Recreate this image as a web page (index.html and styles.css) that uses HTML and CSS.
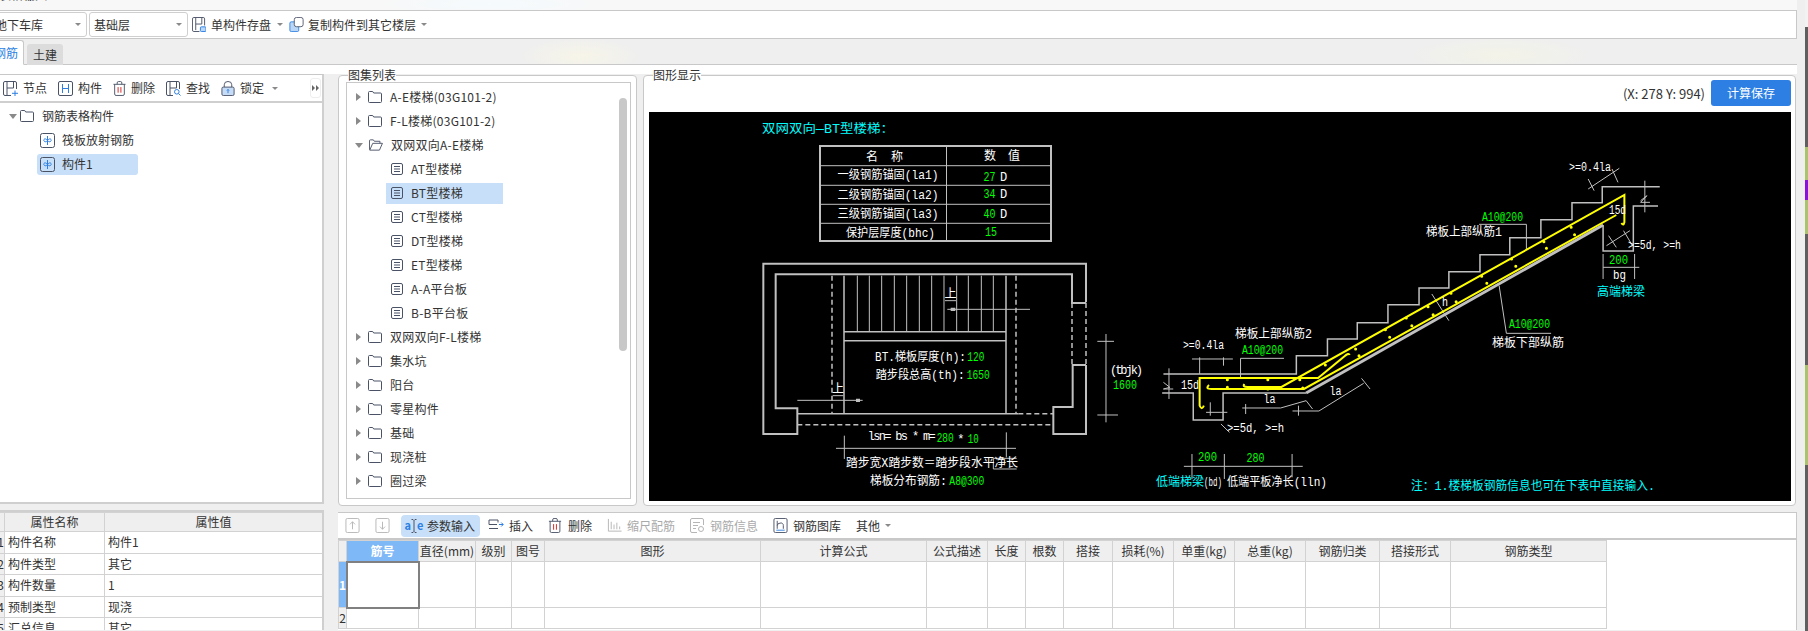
FILE: index.html
```html
<!DOCTYPE html>
<html lang="zh-CN">
<head>
<meta charset="utf-8">
<title>表格输入</title>
<link rel="stylesheet" href="styles.css">
</head>
<body>
<svg class="defs" aria-hidden="true">
  <symbol id="folder" viewBox="0 0 14 12"><path class="ln" d="M.5 2V1.5a1 1 0 0 1 1-1h3.2l1 1.5h6.8a1 1 0 0 1 1 1v7.5a1 1 0 0 1-1 1h-11a1 1 0 0 1-1-1z"/></symbol>
  <symbol id="open" viewBox="0 0 15 12"><path class="ln" d="M.5 11V1.5a1 1 0 0 1 1-1h3.2l1 1.5h6v2M.8 11.5h10.4l3.2-7.3H4z"/></symbol>
  <symbol id="doc" viewBox="0 0 12 12"><rect class="ln" x=".5" y=".5" width="11" height="11" rx="1.5"/><path class="ln" d="M3 3.5h6M3 6h6M3 8.5h6"/></symbol>
  <symbol id="leaf" viewBox="0 0 15 15"><rect class="ln" x=".5" y=".5" width="14" height="14" rx="2"/><path class="bl" d="M7.500 3v9M7.500 7.500C5 4 2.500 7 4.500 8.500 5.500 9.200 6.500 8.500 7.500 7.500 10 4 12.500 7 10.500 8.500 9.500 9.200 8.500 8.500 7.500 7.500"/></symbol>
  <symbol id="save" viewBox="0 0 15 16"><path class="ln" d="M8 15.5H2a1.5 1.5 0 0 1-1.500-1.500V2A1.500 1.500 0 0 1 2 .5h10A1.500 1.500 0 0 1 13.500 2v7M4 1v13M4 7.500h6.500M10.500 1v6.500"/><rect class="blf" x="9" y="10.500" width="6" height="5" rx="1"/></symbol>
  <symbol id="copy" viewBox="0 0 16 17"><rect class="blf" x=".5" y="5.500" width="10" height="11" rx="1.500"/><rect class="lnw" x="5.500" y=".5" width="10" height="10.500" rx="2.500"/></symbol>
  <symbol id="node" viewBox="0 0 15 15"><path class="ln" d="M8 14.500H2A1.500 1.500 0 0 1 .5 13V2A1.500 1.500 0 0 1 2 .5h10A1.500 1.500 0 0 1 13.500 2v6M4 1v13M4 7h6.500M10.500 1v6"/><path class="bl" d="M12 9.500v5.500M9 12.300h6"/></symbol>
  <symbol id="part" viewBox="0 0 15 15"><rect class="ln" x=".5" y=".5" width="14" height="14" rx="1.500"/><path class="bl" d="M4.500 3v9M10.500 3v9M4.500 7.500h6"/></symbol>
  <symbol id="trash" viewBox="0 0 14 16"><path class="ln" d="M.5 3.500h13M4.500 3.500V2A1.500 1.500 0 0 1 6 .5h2A1.500 1.500 0 0 1 9.500 2v1.500M1.800 3.500v10.500a1.500 1.500 0 0 0 1.500 1.500h7.400a1.500 1.500 0 0 0 1.500-1.500V3.500"/><path class="rd" d="M5.500 6.500v6M8.500 6.500v6"/></symbol>
  <symbol id="find" viewBox="0 0 15 15"><path class="ln" d="M7 14.500H2A1.500 1.500 0 0 1 .5 13V2A1.500 1.500 0 0 1 2 .5h10A1.500 1.500 0 0 1 13.500 2v6M4 1v13M4 7h6.500M10.500 1v6"/><circle class="bl" cx="10.800" cy="10.800" r="2.300"/><path class="bl" d="M12.500 12.500l2 2"/></symbol>
  <symbol id="lock" viewBox="0 0 14 16"><path class="ln" d="M3 7V4a4 3.500 0 0 1 8 0v3"/><rect class="lkb" x=".5" y="6.500" width="13" height="9" rx="1.500"/><path class="bl" d="M7 9v4M5.800 10.200L7 9l1.200 1.200"/></symbol>
  <symbol id="up" viewBox="0 0 15 16"><rect class="dim" x=".5" y=".5" width="14" height="15" rx="1.500"/><path class="dim" d="M7.500 12V4M4.800 6.800l2.700-2.800 2.700 2.800"/></symbol>
  <symbol id="down" viewBox="0 0 15 16"><rect class="dim" x=".5" y=".5" width="14" height="15" rx="1.500"/><path class="dim" d="M7.500 4v8M4.800 9.200l2.700 2.800 2.700-2.800"/></symbol>
  <symbol id="ins" viewBox="0 0 16 14"><path class="ln" d="M10 4V1.500H1V6h8M1 10h9"/><path class="bl" d="M11 6h4M13.200 4l2 2-2 2"/></symbol>
  <symbol id="bars" viewBox="0 0 15 16"><path class="dim" d="M1 1v13h14M4 4v8M7 7v5M10 5v7M13 9v3"/></symbol>
  <symbol id="info" viewBox="0 0 15 15"><path class="dim" d="M7 14.500H2A1.500 1.500 0 0 1 .5 13V2A1.500 1.500 0 0 1 2 .5h10A1.500 1.500 0 0 1 13.500 2v5M3 4.500h7M3 7.500h5M3 10.500h3"/><circle class="dim" cx="11" cy="11" r="2.500"/></symbol>
  <symbol id="lib" viewBox="0 0 15 16"><rect class="ln" x=".5" y=".5" width="14" height="15" rx="1.500"/><path class="ln" d="M4 3v8.500M4 8a3 3 0 0 1 3-2.500A2.500 2.500 0 0 1 10.500 8v3.500"/><path class="bl" d="M3 13h9"/></symbol>
  <symbol id="beam" viewBox="0 0 6 16"><path class="ln" d="M.5 1.500H2L3 2.500 4 1.500h1.500M3 2.500v11M.5 14.500H2l1-1 1 1h1.500"/></symbol>
</svg>

<div class="screen">
  <div class="window">
    <div class="titlebar"><span class="title-text">表格输入</span></div>

    <div class="toolbar">
      <div class="select select-first"><span>地下车库</span><i class="caret"></i></div>
      <div class="select"><span>基础层</span><i class="caret"></i></div>
      <div class="tool tool-save"><svg class="ic ic-w14"><use href="#save"/></svg><span>单构件存盘</span><i class="caret"></i></div>
      <div class="tool tool-copy"><svg class="ic ic-w15"><use href="#copy"/></svg><span>复制构件到其它楼层</span><i class="caret"></i></div>
    </div>

    <div class="tabs">
      <div class="tab tab-active">钢筋</div>
      <div class="tab">土建</div>
    </div>

    <div class="workspace">
      <div class="left">
        <div class="left-panel">
          <div class="left-tools">
            <div class="tool"><svg class="ic"><use href="#node"/></svg><span>节点</span></div>
            <div class="tool"><svg class="ic"><use href="#part"/></svg><span>构件</span></div>
            <div class="tool"><svg class="ic ic-w13"><use href="#trash"/></svg><span>删除</span></div>
            <div class="tool"><svg class="ic"><use href="#find"/></svg><span>查找</span></div>
            <div class="tool"><svg class="ic ic-w14"><use href="#lock"/></svg><span>锁定</span><i class="caret"></i></div>
            <div class="more"><i class="mini"></i><i class="mini"></i></div>
          </div>
          <div class="left-tree">
            <div class="lrow"><i class="tri tri-down"></i><svg class="fold"><use href="#folder"/></svg><span class="lab">钢筋表格构件</span></div>
            <div class="lrow lrow-child"><div class="lsel"><svg class="ic"><use href="#leaf"/></svg><span>筏板放射钢筋</span></div></div>
            <div class="lrow lrow-child"><div class="lsel is-selected"><svg class="ic"><use href="#leaf"/></svg><span>构件1</span></div></div>
          </div>
        </div>
        <div class="props">
          <table class="grid prop-grid">
            <colgroup><col class="pc0"><col class="pc1"><col class="pc2"></colgroup>
            <thead><tr><th></th><th>属性名称</th><th>属性值</th></tr></thead>
            <tbody>
              <tr><td class="rn">1</td><td>构件名称</td><td>构件1</td></tr>
              <tr><td class="rn">2</td><td>构件类型</td><td>其它</td></tr>
              <tr><td class="rn">3</td><td>构件数量</td><td>1</td></tr>
              <tr><td class="rn">4</td><td>预制类型</td><td>现浇</td></tr>
              <tr><td class="rn">5</td><td>汇总信息</td><td>其它</td></tr>
            </tbody>
          </table>
        </div>
      </div>

      <div class="right">
        <div class="upper">
          <section class="group atlas">
            <div class="legend">图集列表</div>
            <div class="list">
              <div class="scrollbar"></div>
              <div class="row"><i class="tri"></i><svg class="fold"><use href="#folder"/></svg><span>A-E楼梯(03G101-2)</span></div>
              <div class="row"><i class="tri"></i><svg class="fold"><use href="#folder"/></svg><span>F-L楼梯(03G101-2)</span></div>
              <div class="row"><i class="tri tri-down"></i><svg class="fold"><use href="#open"/></svg><span>双网双向A-E楼梯</span></div>
              <div class="row row-child"><div class="csel"><svg class="doc"><use href="#doc"/></svg><span>AT型楼梯</span></div></div>
              <div class="row row-child"><div class="csel is-selected"><svg class="doc"><use href="#doc"/></svg><span>BT型楼梯</span></div></div>
              <div class="row row-child"><div class="csel"><svg class="doc"><use href="#doc"/></svg><span>CT型楼梯</span></div></div>
              <div class="row row-child"><div class="csel"><svg class="doc"><use href="#doc"/></svg><span>DT型楼梯</span></div></div>
              <div class="row row-child"><div class="csel"><svg class="doc"><use href="#doc"/></svg><span>ET型楼梯</span></div></div>
              <div class="row row-child"><div class="csel"><svg class="doc"><use href="#doc"/></svg><span>A-A平台板</span></div></div>
              <div class="row row-child"><div class="csel"><svg class="doc"><use href="#doc"/></svg><span>B-B平台板</span></div></div>
              <div class="row"><i class="tri"></i><svg class="fold"><use href="#folder"/></svg><span>双网双向F-L楼梯</span></div>
              <div class="row"><i class="tri"></i><svg class="fold"><use href="#folder"/></svg><span>集水坑</span></div>
              <div class="row"><i class="tri"></i><svg class="fold"><use href="#folder"/></svg><span>阳台</span></div>
              <div class="row"><i class="tri"></i><svg class="fold"><use href="#folder"/></svg><span>零星构件</span></div>
              <div class="row"><i class="tri"></i><svg class="fold"><use href="#folder"/></svg><span>基础</span></div>
              <div class="row"><i class="tri"></i><svg class="fold"><use href="#folder"/></svg><span>现浇桩</span></div>
              <div class="row"><i class="tri"></i><svg class="fold"><use href="#folder"/></svg><span>圈过梁</span></div>
              <div class="row"><i class="tri"></i><svg class="fold"><use href="#folder"/></svg></div>
            </div>
          </section>

          <section class="group drawing">
            <div class="legend">图形显示</div>
            <div class="draw-head"><span class="coords">(X: 278 Y: 994)</span><button class="calc">计算保存</button></div>
            <svg class="cad" viewBox="649 113 1142 389" width="1142" height="389">
              <text class="c" x="762" y="131" font-size="15" textLength="132" lengthAdjust="spacingAndGlyphs">双网双向—BT型楼梯：</text>
              <path class="th" d="M820 147H1051V242H820Z"/>
              <path class="tn" d="M946.500 147V242M820 166.700H1051M820 186.300H1051M820 205.300H1051M820 224.300H1051"/>
              <text class="w" x="866" y="159" textLength="37" lengthAdjust="spacing">名 称</text>
              <text class="w" x="984" y="158" textLength="36" lengthAdjust="spacing">数 值</text>
              <text class="w" x="837.500" y="177" textLength="101" lengthAdjust="spacingAndGlyphs">一级钢筋锚固(la1)</text>
              <text class="w" x="837.500" y="197" textLength="101" lengthAdjust="spacingAndGlyphs">二级钢筋锚固(la2)</text>
              <text class="w" x="837.500" y="216" textLength="101" lengthAdjust="spacingAndGlyphs">三级钢筋锚固(la3)</text>
              <text class="w" x="846" y="235" textLength="89" lengthAdjust="spacingAndGlyphs">保护层厚度(bhc)</text>
              <text class="g" x="983.500" y="179" textLength="12" lengthAdjust="spacingAndGlyphs">27</text><text class="w" x="1000" y="179">D</text>
              <text class="g" x="983.500" y="196" textLength="12" lengthAdjust="spacingAndGlyphs">34</text><text class="w" x="1000" y="196">D</text>
              <text class="g" x="983.500" y="216" textLength="12" lengthAdjust="spacingAndGlyphs">40</text><text class="w" x="1000" y="216">D</text>
              <text class="g" x="985" y="234" textLength="12" lengthAdjust="spacingAndGlyphs">15</text>

              <g transform="translate(740 250) scale(.33333)">
                <path class="th" d="M1038 160V44H70V555H172V478H107V76H996V162H1038M1038 348H998V474H940V555H1038V348"/>
                <path class="dash2" d="M996 162V345M1038 162V345M276 80V492M828 80V492M835 494H940M172 527H940"/>
                <path class="tw" d="M312 80V492M798 80V492M312 248H798M312 275H798M172 494H835"/>
                <path class="tn" d="M352 80V248M388 80V248M425 80V248M463 80V248M500 80V248M538 80V248M575 80V248M612 80V248M650 80V248M685 80V248M724 80V248M760 80V248M615 155H648M622 181H870M278 440H310M172 454H368M288 598H828M313 560V630M799 550V625M1098 255V520M1072 277H1122M1072 498H1134M760 628H830M760 660H830M760 628V660"/>
                <path class="fl" d="M632 176h14v10h-14zM348 449h12v10h-12z"/>
              </g>
              <text class="w" x="950.500" y="296" text-anchor="middle" font-size="13">上</text>
              <text class="w" x="838" y="391" text-anchor="middle" font-size="13">上</text>
              <text class="w" x="875" y="359" textLength="91" lengthAdjust="spacingAndGlyphs">BT.梯板厚度(h):</text>
              <text class="g" x="967.300" y="359" textLength="17" lengthAdjust="spacingAndGlyphs">120</text>
              <text class="w" x="875.700" y="377" textLength="89" lengthAdjust="spacingAndGlyphs">踏步段总高(th):</text>
              <text class="g" x="966.700" y="377" textLength="23" lengthAdjust="spacingAndGlyphs">1650</text>
              <text class="w" x="867.700" y="438" textLength="68" lengthAdjust="spacing">lsn= bs * m=</text>
              <text class="g" x="936.700" y="440" textLength="17" lengthAdjust="spacingAndGlyphs">280</text>
              <text class="w" x="957.300" y="441">*</text>
              <text class="g" x="967.700" y="441" textLength="11" lengthAdjust="spacingAndGlyphs">10</text>
              <text class="w" x="846" y="465" textLength="172" lengthAdjust="spacingAndGlyphs">踏步宽X踏步数＝踏步段水平净长</text>
              <text class="w" x="870" y="483" textLength="77" lengthAdjust="spacingAndGlyphs">梯板分布钢筋:</text>
              <text class="g" x="949.300" y="483" textLength="35" lengthAdjust="spacingAndGlyphs">A8@300</text>
              <text class="w" x="1110" y="372" textLength="33" lengthAdjust="spacing">(tbjk)</text>
              <text class="g" x="1113" y="387" textLength="24" lengthAdjust="spacingAndGlyphs">1600</text>

              <g transform="translate(1140 140) scale(.42602 .33333)">
                <path class="tw" d="M55 705H367V650H440V600H510V551H582V497H655V447H725V398H798V347H868V296H941V242H1014V191H1085V143H1220"/>
                <path class="tw" d="M52 762H125V843H195V762H390M1087 258V336H1158V201H1216"/>
                <path class="slope" d="M390 762L1087 258"/>
                <path class="tn" d="M796 256H907V330M236 658H338M236 658V715M843 440L860 583H965M420 816L525 733M520 718L540 750M420 816H358M372 800V830M330 807L390 785L405 810M330 807H240M248 795V825M685 465L725 545M1052 150L1125 88M1052 120L1066 155M1108 90L1122 130M1185 125V220M1175 185L1190 170L1175 190H1197M68 688V780M55 730L70 745L55 750H78M140 655V705M122 660H218M196 655V680M155 820H205M165 790V830M190 855L210 880M1095 320L1150 275M1100 290L1118 325M1135 275L1155 318M1087 385H1172M1087 345V420M1161 345V420M103 982H382M122 945V1020M198 945V1020M357 945V1015"/>
                <path class="ye" d="M245 735Q240 744 252 744H332L1137 168V250Q1135 262 1130 252"/>
                <path class="ye" d="M492 648Q490 640 480 652L418 717H140V800Q145 815 150 800"/>
                <path class="ye" d="M162 738Q152 750 168 750H385L1118 228"/>
                <path class="dots" d="M1012 265h.1M948 308h.1M872 360h.1M802 412h.1M730 463h.1M676 503h.1M625 537h.1M576 572h.1M506 630h.1M435 678h.1M375 722h.1M300 722h.1M205 722h.1M205 745h.1M300 750h.1M382 747h.1M514 650h.1M586 595h.1M638 560h.1M688 527h.1M742 488h.1M814 433h.1M882 382h.1M954 328h.1M1020 287h.1"/>
              </g>
              <text class="w" x="1569" y="169" textLength="42" lengthAdjust="spacingAndGlyphs">&gt;=0.4la</text>
              <text class="w" x="1609" y="212" textLength="17" lengthAdjust="spacingAndGlyphs">15d</text>
              <text class="g" x="1482" y="219" textLength="41" lengthAdjust="spacingAndGlyphs">A10@200</text>
              <text class="w" x="1426" y="234" textLength="76" lengthAdjust="spacingAndGlyphs">梯板上部纵筋1</text>
              <text class="w" x="1628" y="247" textLength="53" lengthAdjust="spacingAndGlyphs">&gt;=5d, &gt;=h</text>
              <text class="g" x="1609" y="262" textLength="19" lengthAdjust="spacingAndGlyphs">200</text>
              <text class="w" x="1613" y="277" textLength="13" lengthAdjust="spacingAndGlyphs">bg</text>
              <text class="c" x="1597" y="294" textLength="48" lengthAdjust="spacingAndGlyphs">高端梯梁</text>
              <text class="w" x="1442" y="304" textLength="6" lengthAdjust="spacingAndGlyphs">h</text>
              <text class="g" x="1509" y="326" textLength="41" lengthAdjust="spacingAndGlyphs">A10@200</text>
              <text class="w" x="1492" y="345" textLength="72" lengthAdjust="spacingAndGlyphs">梯板下部纵筋</text>
              <text class="w" x="1235" y="336" textLength="77" lengthAdjust="spacingAndGlyphs">梯板上部纵筋2</text>
              <text class="w" x="1183" y="347" textLength="41" lengthAdjust="spacingAndGlyphs">&gt;=0.4la</text>
              <text class="g" x="1242" y="352" textLength="41" lengthAdjust="spacingAndGlyphs">A10@200</text>
              <text class="w" x="1181" y="387" textLength="18" lengthAdjust="spacingAndGlyphs">15d</text>
              <text class="w" x="1263.500" y="401" textLength="12" lengthAdjust="spacingAndGlyphs">la</text>
              <text class="w" x="1329.500" y="393" textLength="12" lengthAdjust="spacingAndGlyphs">la</text>
              <text class="w" x="1227" y="430" textLength="57" lengthAdjust="spacingAndGlyphs">&gt;=5d, &gt;=h</text>
              <text class="g" x="1198" y="459" textLength="19" lengthAdjust="spacingAndGlyphs">200</text>
              <text class="g" x="1246.500" y="460" textLength="18" lengthAdjust="spacingAndGlyphs">280</text>
              <text class="c" x="1156" y="484" textLength="48" lengthAdjust="spacingAndGlyphs">低端梯梁</text>
              <text class="w" x="1204" y="484" textLength="18" lengthAdjust="spacingAndGlyphs">(bd)</text>
              <text class="w" x="1227" y="484" textLength="100" lengthAdjust="spacingAndGlyphs">低端平板净长(lln)</text>
              <text class="c" x="1411" y="488" textLength="244" lengthAdjust="spacingAndGlyphs">注：1.楼梯板钢筋信息也可在下表中直接输入.</text>
            </svg>
          </section>
        </div>

        <section class="lower">
          <div class="lower-tools">
            <svg class="ic"><use href="#up"/></svg>
            <svg class="ic ic-down"><use href="#down"/></svg>
            <div class="tool tool-active"><span class="ae">a<svg class="beam"><use href="#beam"/></svg>e</span><span>参数输入</span></div>
            <div class="tool"><svg class="ic ic-w16"><use href="#ins"/></svg><span>插入</span></div>
            <div class="tool tool-del"><svg class="ic ic-w14"><use href="#trash"/></svg><span>删除</span></div>
            <div class="tool is-off"><svg class="ic"><use href="#bars"/></svg><span>缩尺配筋</span></div>
            <div class="tool is-off"><svg class="ic"><use href="#info"/></svg><span>钢筋信息</span></div>
            <div class="tool"><svg class="ic"><use href="#lib"/></svg><span>钢筋图库</span></div>
            <div class="tool"><span>其他</span><i class="caret"></i></div>
          </div>
          <table class="grid rebar-grid">
            <colgroup>
              <col class="r0"><col class="r1"><col class="r2"><col class="r3"><col class="r4"><col class="r5"><col class="r6"><col class="r7"><col class="r8"><col class="r9"><col class="r10"><col class="r11"><col class="r12"><col class="r13"><col class="r14"><col class="r15"><col class="r16">
            </colgroup>
            <thead>
              <tr><th></th><th class="hit">筋号</th><th>直径(mm)</th><th>级别</th><th>图号</th><th>图形</th><th>计算公式</th><th>公式描述</th><th>长度</th><th>根数</th><th>搭接</th><th>损耗(%)</th><th>单重(kg)</th><th>总重(kg)</th><th>钢筋归类</th><th>搭接形式</th><th>钢筋类型</th></tr>
            </thead>
            <tbody>
              <tr class="tall"><td class="rn hit">1</td><td class="cur"></td><td></td><td></td><td></td><td></td><td></td><td></td><td></td><td></td><td></td><td></td><td></td><td></td><td></td><td></td><td></td></tr>
              <tr><td class="rn">2</td><td></td><td></td><td></td><td></td><td></td><td></td><td></td><td></td><td></td><td></td><td></td><td></td><td></td><td></td><td></td><td></td></tr>
            </tbody>
          </table>
        </section>
      </div>
    </div>
  </div>
  <div class="behind">
    <i class="b-light"></i><i class="b-dark b-1"></i><i class="b-green b-2"></i><i class="b-purple"></i><i class="b-green b-4"></i><i class="b-dark b-5"></i><i class="b-green b-6"></i><i class="b-dark b-7"></i>
  </div>
</div>
</body>
</html>
```

FILE: styles.css
```css
* { box-sizing: border-box; }
html, body { margin: 0; padding: 0; background: #efefef; }
body {
  font-family: "Noto Sans CJK SC", "Noto Sans", sans-serif;
  font-size: 12px;
  line-height: 1;
  color: #333;
}
.defs { position: absolute; width: 0; height: 0; }
.screen { display: flex; width: 1808px; height: 631px; overflow: hidden; }
.window {
  width: 1805px;
  height: 631px;
  padding-right: 8px;
  overflow: hidden;
  background:
    radial-gradient(ellipse 110px 12px at 490px 4px, #e8f5fc, transparent),
    radial-gradient(ellipse 60px 18px at 580px 56px, #f7f5e8, transparent),
    radial-gradient(ellipse 90px 18px at 1500px 55px, #f3f3e8, transparent),
    #efefef;
}
.behind { width: 3px; height: 631px; display: flex; flex-direction: column; }
.behind i { display: block; }
.b-light { height: 27px; background: #f2f2f2; }
.b-dark { background: #5f5f5f; }
.b-green { background: #a9c46c; }
.b-purple { height: 20px; background: #8a10e0; }
.b-1 { height: 120px; }
.b-2 { height: 33px; }
.b-4 { height: 34px; }
.b-5 { height: 131px; }
.b-6 { height: 100px; }
.b-7 { height: 166px; }

/* icon strokes */
.ln { fill: none; stroke: #4a5266; stroke-width: 1; }
.lnw { fill: #fff; stroke: #4a5266; stroke-width: 1; }
.bl { fill: none; stroke: #2d7fe3; stroke-width: 1; }
.blf { fill: #b9d6f7; stroke: #2d7fe3; stroke-width: 1; }
.rd { fill: none; stroke: #d81e1e; stroke-width: 1; }
.lkb { fill: #c6dcf6; stroke: #4a5266; stroke-width: 1; }
.dim { fill: none; stroke: #b5b5b5; stroke-width: 1; }
.ic { width: 15px; height: 15px; flex: none; display: block; }
.ic-w13 { width: 13px; }
.ic-w14 { width: 14px; }
.ic-w15 { width: 15px; }
.ic-w16 { width: 16px; }
.fold { width: 14px; height: 12px; flex: none; display: block; }
.doc { width: 12px; height: 12px; flex: none; display: block; }

.tri {
  width: 0; height: 0; flex: none; display: block;
  border-left: 5px solid #8a8a8a;
  border-top: 4px solid transparent;
  border-bottom: 4px solid transparent;
}
.tri-down {
  border-top: 5px solid #8a8a8a;
  border-left: 4px solid transparent;
  border-right: 4px solid transparent;
  border-bottom: 0;
}
.caret {
  width: 0; height: 0; flex: none; display: block;
  border-top: 3px solid #8a8a8a;
  border-left: 3px solid transparent;
  border-right: 3px solid transparent;
}
.mini {
  width: 0; height: 0; flex: none; display: block;
  border-left: 3px solid #666;
  border-top: 3px solid transparent;
  border-bottom: 3px solid transparent;
}

/* title */
.titlebar { height: 10px; overflow: hidden; background: rgba(255,255,255,.55); }
.title-text { display: block; margin: -11px 0 0 -1px; height: 14px; line-height: 12px; }

/* top toolbar */
.toolbar {
  height: 29px;
  display: flex;
  align-items: center;
  background: #fff;
  border-top: 1px solid #c8c8c8;
  border-bottom: 1px solid #c8c8c8;
  border-right: 1px solid #c8c8c8;
}
.select {
  width: 99px;
  height: 25px;
  margin-right: 2px;
  padding: 0 5px 0 4px;
  display: flex;
  align-items: center;
  justify-content: space-between;
  border: 1px solid #cfcfcf;
  border-radius: 3px;
}
.select-first { margin-left: -12px; padding-left: 6px; }
.tool { display: flex; align-items: center; gap: 5px; white-space: nowrap; }
.tool-save { margin-left: 2px; gap: 5px; }
.tool-copy { margin-left: 6px; gap: 4px; }
.tool-save .caret, .tool-copy .caret { margin-left: 1px; }

/* tabs */
.tabs { height: 26px; display: flex; align-items: flex-end; gap: 3px; position: relative; z-index: 1; margin-bottom: -1px; }
.tab {
  width: 36px; height: 21px;
  display: flex; align-items: center; justify-content: center;
  background: #dcdcdc; border-radius: 3px 3px 0 0;
}
.tab-active {
  width: 36px; height: 25px; margin-left: -12px;
  color: #2d7fe3; background: #fff;
  border: 1px solid #c8c8c8; border-bottom-color: #fff;
}

/* workspace */
.workspace {
  height: 566px;
  display: flex;
  border-top: 1px solid #c8c8c8;
  background: linear-gradient(#fff 9px, transparent 9px);
}
.left { width: 324px; margin-right: 14px; padding-top: 9px; flex: none; display: flex; flex-direction: column; }
.left-panel {
  height: 430px;
  flex: none;
  background: #fff;
  border-top: 1px solid #c8c8c8;
  border-right: 2px solid #cfcfcf;
  border-bottom: 2px solid #cfcfcf;
}
.left-tools {
  height: 28px;
  padding: 0 1px 0 3px;
  display: flex;
  align-items: center;
  gap: 11px;
  border-bottom: 2px solid #cfcfcf;
}
.left-tools .caret { margin-left: 3px; }
.more {
  margin-left: auto; width: 11px; height: 20px;
  display: flex; align-items: center; justify-content: center; gap: 1px;
  border: 1px solid #eee; border-radius: 3px;
}
.left-tree { padding-top: 1px; }
.lrow { height: 24px; display: flex; align-items: center; padding-left: 9px; }
.lrow .fold { margin-left: 3px; }
.lab { margin-left: 8px; }
.lrow-child { padding-left: 37px; }
.lsel { width: 101px; height: 21px; padding-left: 3px; display: flex; align-items: center; gap: 7px; border-radius: 3px; }
.is-selected { background: #c7dff8; }

.props { margin-top: 6px; flex: 1; overflow: hidden; border-right: 2px solid #cfcfcf; border-top: 2px solid #cfcfcf; background: #fff; }

/* tables */
.grid { border-collapse: collapse; table-layout: fixed; }
.grid th, .grid td { padding: 0; height: 21px; border: 1px solid #d2d2d2; overflow: hidden; white-space: nowrap; }
.grid th { font-weight: 400; background: #efefef; text-align: center; }
.prop-grid { width: 322px; margin-left: -4px; }
.prop-grid th { height: 19px; }
.prop-grid td { padding-left: 3px; height: 21.5px; }
.prop-grid .rn { padding: 0; text-align: center; background: #efefef; }
.pc0 { width: 8px; }
.pc1 { width: 100px; }
.pc2 { width: 218px; }

/* right column */
.right { width: 1459px; flex: none; display: flex; flex-direction: column; padding-top: 10px; }
.upper { height: 431px; display: flex; gap: 6px; }
.group { position: relative; height: 431px; background: #fff; border: 1px solid #c8c8c8; border-radius: 4px; }
.legend { position: absolute; top: -8px; left: 9px; height: 13px; line-height: 13px; background: #fff; }
.atlas { width: 299px; padding: 6px 5px 6px 7px; }
.list { position: relative; height: 417px; overflow: hidden; border: 1px solid #c8c8c8; padding-top: 2px; }
.scrollbar { position: absolute; top: 15px; left: 272px; width: 8px; height: 253px; background: #c8c8c8; border-radius: 4px; }
.row { height: 24px; display: flex; align-items: center; padding-left: 9px; white-space: nowrap; letter-spacing: .25px; }
.row .tri { margin-right: 7px; }
.row .tri-down { margin-left: -1px; margin-right: 6px; }
.row .fold { margin-right: 8px; width: 14px; }
.row-child { padding-left: 39px; }
.csel { width: 117px; height: 21px; padding-left: 5px; display: flex; align-items: center; gap: 8px; }

.drawing { width: 1153px; padding: 0 4px 0 5px; }
.draw-head { height: 36px; padding-top: 4px; display: flex; justify-content: flex-end; gap: 6px; }
.coords { height: 26px; line-height: 28px; font-size: 13px; }
.calc {
  width: 80px; height: 26px; padding: 0; margin: 0;
  font: inherit; color: #fff;
  background: #2d7fe3; border: 0; border-radius: 3px;
}
.cad { display: block; background: #000; }
.cad text { font-size: 12px; dominant-baseline: central; font-family: "Liberation Mono", "Noto Sans CJK SC", monospace; }
.cad .w { fill: #fff; }
.cad .g { fill: #00ff00; }
.cad .c { fill: #00ffff; }
.cad path { vector-effect: non-scaling-stroke; fill: none; }
.cad .th { stroke: #c0c0c0; stroke-width: 2; }
.cad .tw { stroke: #c0c0c0; stroke-width: 1.500; }
.cad .tn { stroke: #c0c0c0; stroke-width: 1; }
.cad .dash2 { stroke: #c0c0c0; stroke-width: 1.500; stroke-dasharray: 5 3; }
.cad .fl { fill: #c0c0c0; }
.cad .slope { stroke: #c0c0c0; stroke-width: 3; }
.cad .ye { stroke: #ffff00; stroke-width: 2; }
.cad .dots { stroke: #ffff00; stroke-width: 3; stroke-linecap: round; }

/* lower */
.lower {
  margin-top: 6px; flex: 1; background: #fff; overflow: hidden;
  border-top: 1px solid #c8c8c8;
  border-right: 1px solid #c8c8c8;
}
.lower-tools {
  height: 27px;
  padding-left: 7px;
  display: flex;
  align-items: center;
  gap: 15px;
  border-bottom: 2px solid #c8c8c8;
}
.ic-down { margin-right: -4px; }
.tool-active { width: 79px; height: 22px; padding-left: 5px; margin-right: -7px; background: #c7dff8; border-radius: 4px; }
.tool-del { gap: 6px; }
.ae { color: #2d7fe3; font-weight: 700; width: 16px; display: flex; align-items: center; justify-content: center; font-size: 11px; }
.beam { width: 6px; height: 16px; flex: none; display: block; }
.is-off { color: #aaa; }
.rebar-grid { width: 1269px; }
.rebar-grid .tall td { height: 46px; }
.rebar-grid .rn { background: #efefef; text-align: center; }
.rebar-grid .hit { background: #7eb8f7; color: #fff; font-weight: 700; }
.rebar-grid .cur { border: 2px solid #808080; }
.r0 { width: 8px; } .r1 { width: 72px; } .r2 { width: 57px; } .r3 { width: 36px; } .r4 { width: 33px; }
.r5 { width: 216px; } .r6 { width: 166px; } .r7 { width: 61px; } .r8 { width: 38px; } .r9 { width: 38px; }
.r10 { width: 49px; } .r11 { width: 61px; } .r12 { width: 61px; } .r13 { width: 71px; } .r14 { width: 74px; }
.r15 { width: 71px; } .r16 { width: 156px; }
```
